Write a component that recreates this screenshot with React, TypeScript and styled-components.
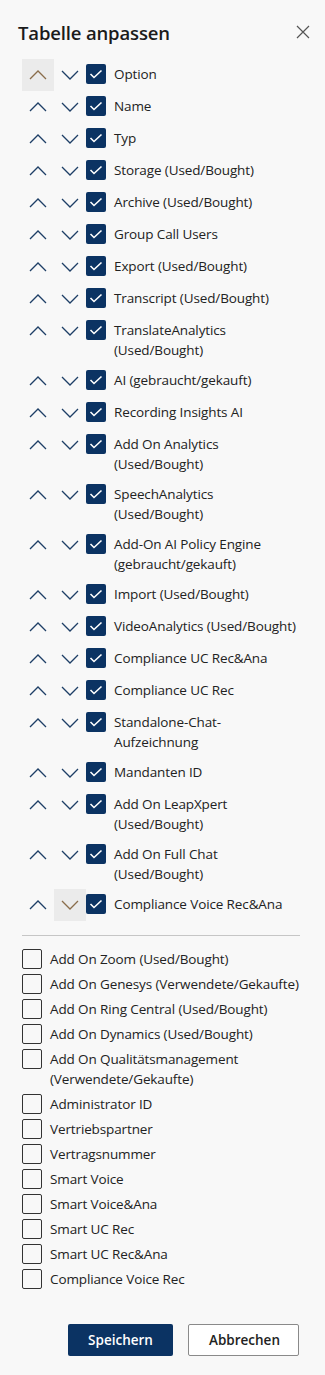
import styled, { createGlobalStyle } from "styled-components";

const Global = createGlobalStyle`
  html, body { margin: 0; padding: 0; background: #f8f8f8; }
  body { font-family: "Open Sans", "Noto Sans", sans-serif; color: #222; }
`;

const Panel = styled.div`
  width: 325px;
  min-height: 1375px;
  box-sizing: border-box;
  padding: 20px 10px 0 18px;
  background: #f8f8f8;
`;

const Header = styled.div`
  display: flex;
  align-items: center;
  justify-content: space-between;
  height: 24px;
`;

const Title = styled.h2`
  margin: 0;
  font-size: 18.5px;
  font-weight: 600;
  color: #1b1b1b;
  letter-spacing: -0.15px;
`;

const CloseBtn = styled.button`
  border: none;
  background: none;
  padding: 0;
  width: 24px;
  height: 24px;
  display: flex;
  align-items: center;
  justify-content: center;
  color: #555;
`;

const List = styled.div`
  display: flex;
  flex-direction: column;
  padding: 15px 0 0 4px;
  width: 278px;
`;

const Row = styled.div`
  display: flex;
  align-items: flex-start;
  padding: 5px 0;
`;

const Arrow = styled.button<{ $active?: boolean }>`
  flex: none;
  width: 32px;
  height: 32px;
  margin: -5px 0;
  border: none;
  padding: 0;
  display: flex;
  align-items: center;
  justify-content: center;
  background: ${(p) => (p.$active ? "#ebebeb" : "transparent")};
  color: ${(p) => (p.$active ? "#8a6d4b" : "#1e3f66")};
`;

const Box = styled.span<{ $checked?: boolean }>`
  flex: none;
  width: 20px;
  height: 20px;
  box-sizing: border-box;
  border-radius: 2px;
  display: flex;
  align-items: center;
  justify-content: center;
  background: ${(p) => (p.$checked ? "#0b3363" : "transparent")};
  border: ${(p) => (p.$checked ? "none" : "1px solid #333")};
`;

const Label = styled.span`
  margin-left: 8px;
  font-size: 13.5px;
  line-height: 20px;
  letter-spacing: -0.12px;
  color: #222;
`;

const Divider = styled.hr`
  margin: 14px 0 13px;
  border: none;
  border-top: 1px solid #c6c6c6;
`;

const PlainRow = styled.div`
  display: flex;
  align-items: flex-start;
  margin-bottom: 5px;
`;

const Footer = styled.div`
  display: flex;
  justify-content: flex-end;
  gap: 15px;
  margin-top: 30px;
  padding-right: 1px;
`;

const Btn = styled.button<{ $primary?: boolean }>`
  height: 32px;
  padding: 0 20px;
  border-radius: 2px;
  font-family: "Open Sans", "Noto Sans", sans-serif;
  font-size: 13.5px;
  font-weight: 600;
  background: ${(p) => (p.$primary ? "#0b3363" : "#fff")};
  color: ${(p) => (p.$primary ? "#fff" : "#222")};
  border: ${(p) => (p.$primary ? "none" : "1px solid #8a8a8a")};
  width: ${(p) => (p.$primary ? "105px" : "111px")};
`;

const Chevron = ({ up }: { up?: boolean }) => (
  <svg width="18" height="10" viewBox="0 0 18 10" fill="none" stroke="currentColor" strokeWidth="1.3">
    {up ? <path d="M1 9 L9 1 L17 9" /> : <path d="M1 1 L9 9 L17 1" />}
  </svg>
);

const Check = () => (
  <svg width="14" height="10" viewBox="0 0 14 10" fill="none" stroke="#fff" strokeWidth="1.6">
    <path d="M1.5 5 L5 8.5 L12.5 1.5" />
  </svg>
);

const checked = [
  "Option",
  "Name",
  "Typ",
  "Storage (Used/Bought)",
  "Archive (Used/Bought)",
  "Group Call Users",
  "Export (Used/Bought)",
  "Transcript (Used/Bought)",
  "TranslateAnalytics (Used/Bought)",
  "AI (gebraucht/gekauft)",
  "Recording Insights AI",
  "Add On Analytics (Used/Bought)",
  "SpeechAnalytics (Used/Bought)",
  "Add-On AI Policy Engine (gebraucht/gekauft)",
  "Import (Used/Bought)",
  "VideoAnalytics (Used/Bought)",
  "Compliance UC Rec&Ana",
  "Compliance UC Rec",
  "Standalone-Chat-Aufzeichnung",
  "Mandanten ID",
  "Add On LeapXpert (Used/Bought)",
  "Add On Full Chat (Used/Bought)",
  "Compliance Voice Rec&Ana",
];

const unchecked = [
  "Add On Zoom (Used/Bought)",
  "Add On Genesys (Verwendete/Gekaufte)",
  "Add On Ring Central (Used/Bought)",
  "Add On Dynamics (Used/Bought)",
  "Add On Qualitätsmanagement (Verwendete/Gekaufte)",
  "Administrator ID",
  "Vertriebspartner",
  "Vertragsnummer",
  "Smart Voice",
  "Smart Voice&Ana",
  "Smart UC Rec",
  "Smart UC Rec&Ana",
  "Compliance Voice Rec",
];

export default function App() {
  const last = checked.length - 1;
  return (
    <Panel>
      <Global />
      <Header>
        <Title>Tabelle anpassen</Title>
        <CloseBtn aria-label="close">
          <svg width="14" height="14" viewBox="0 0 14 14" stroke="currentColor" strokeWidth="1.2">
            <path d="M1 1 L13 13 M13 1 L1 13" />
          </svg>
        </CloseBtn>
      </Header>
      <List>
        {checked.map((c, i) => (
          <Row key={c}>
            <Arrow $active={i === 0}><Chevron up /></Arrow>
            <Arrow $active={i === last}><Chevron /></Arrow>
            <Box $checked><Check /></Box>
            <Label>{c}</Label>
          </Row>
        ))}
        <Divider />
        {unchecked.map((c) => (
          <PlainRow key={c}>
            <Box />
            <Label>{c}</Label>
          </PlainRow>
        ))}
        <Footer>
          <Btn $primary>Speichern</Btn>
          <Btn>Abbrechen</Btn>
        </Footer>
      </List>
    </Panel>
  );
}
